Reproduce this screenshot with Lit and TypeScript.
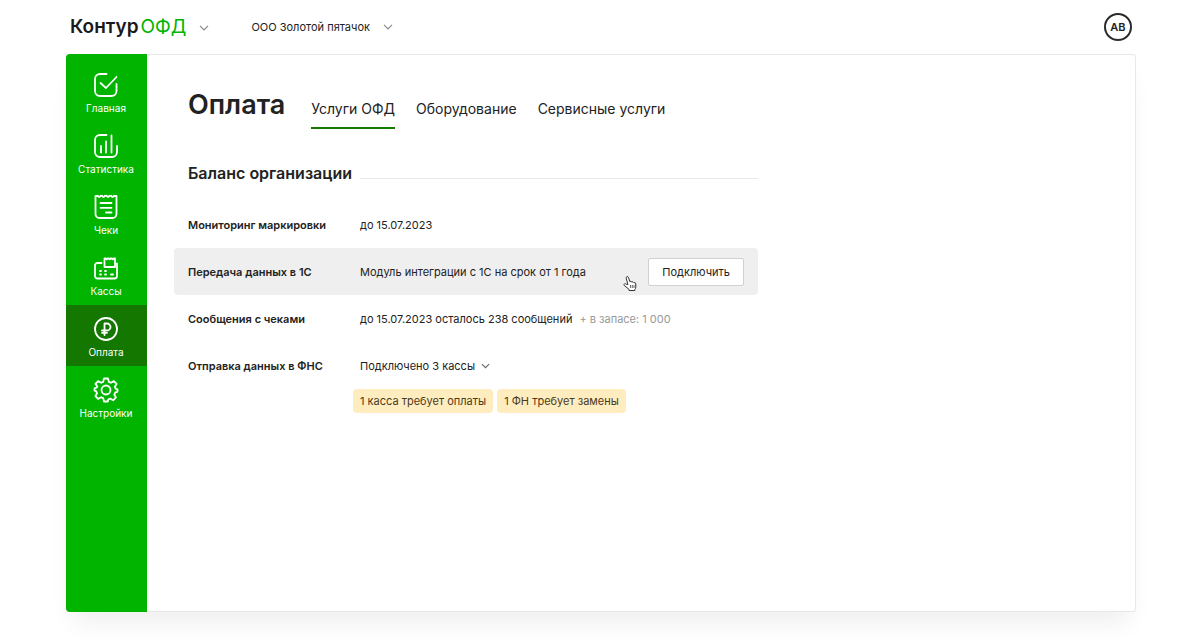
import { LitElement, html, css, svg } from "lit";
import { customElement, property } from "lit/decorators.js";
import { classMap } from "lit/directives/class-map.js";

const icons = {
  home: svg`<path d="M22.500 11V18a5 5 0 0 1-5 5H6a5 5 0 0 1-5-5V6a5 5 0 0 1 5-5H12.500M6.500 10L12 15L22.500 4"/>`,
  stats: svg`<path d="M12.500 1H6a5 5 0 0 0-5 5V18a5 5 0 0 0 5 5H18a5 5 0 0 0 5-5V12M7 12V18.500M12 7.500V18.500M17.500 1.500V18.500"/>`,
  receipts: svg`<path d="M1.500 1V19a4 4 0 0 0 4 4H18.500a4 4 0 0 0 4-4V1M4 .8q1.300 2.600 2.600 0M8.200 .8q1.300 2.600 2.600 0M12.800 .8q1.300 2.600 2.600 0M17.200 .8q1.300 2.600 2.600 0M1.500 1H4M6.600 .8H8.200M10.800 .8H12.800M15.400 .8H17.200M19.800 1H22.500M6.500 8H17.500M6.500 12.800H17.500M12 17.500H17.500"/>`,
  registers: svg`<path d="M7.500 7H3.500A2.500 2.500 0 0 0 1 9.500V20A2.500 2.500 0 0 0 3.500 22.500H20.500A2.500 2.500 0 0 0 23 20V7.500M10.500 11V2.500H12q.8 1.500 1.500 0H15q.8 1.500 1.500 0H18q.8 1.500 1.500 0H21V11ZM6 15H7M11 15H12M6 18.500H7M11 18.500H12M17 18.500H19"/>`,
  payment: svg`<circle cx="12" cy="12" r="11"/><path d="M10.500 18V6.500H13a3.500 3.500 0 0 1 0 7H8M8 15.800H13"/>`,
  settings: svg`<path d="M10 .5h4l.8 3.400 2 .9 3.100-1.700 2.700 2.800-1.700 2.900.9 2.100 1.700.5v2.200l-2.300 1-.9 2 1.600 2.900-2.700 2.800-3-1.700-2 .9L14 23.500h-4l-.8-3.400-2-.9-3.100 1.700-2.700-2.800L3 15.200l-.9-2-1.600-.6v-2.200l2.300-.9.500-1.200L1.400 5.900 4.100 3.100l3.100 1.700 2-.9z"/><circle cx="12" cy="12" r="4.500"/>`,
};

const chevron = html`<svg class="chevron" viewBox="0 0 10 6" aria-hidden="true">
  <path d="M1 .8L5 4.800L9 .8" />
</svg>`;

@customElement("side-item")
class SideItem extends LitElement {
  @property() label = "";
  @property() icon: keyof typeof icons = "home";
  @property({ type: Boolean }) active = false;

  static styles = css`
    :host { display: block; }
    .item {
      display: flex;
      flex-direction: column;
      align-items: center;
      gap: 3px;
      height: 61px;
      padding: 12px 1px 0 0;
      box-sizing: border-box;
      color: #fff;
      font-size: 10px;
      line-height: 16px;
      text-decoration: none;
    }
    .active { background: #137700; }
    svg {
      width: 24px;
      height: 24px;
      overflow: visible;
      fill: none;
      stroke: currentColor;
      stroke-width: 1.8;
      stroke-linecap: round;
      stroke-linejoin: round;
    }
  `;

  render() {
    return html`<a href="#" class=${classMap({ item: true, active: this.active })}>
      <svg viewBox="0 0 24 24" aria-hidden="true">${icons[this.icon]}</svg>${this.label}
    </a>`;
  }
}

@customElement("app-root")
class AppRoot extends LitElement {
  static styles = css`
    :host {
      display: flex;
      flex-direction: column;
      min-height: 100vh;
      box-sizing: border-box;
      padding: 0 64px 28px 66px;
      background: #fff;
      color: #222;
      font-family: Inter, "Open Sans", sans-serif;
      font-size: 11px;
      line-height: 16px;
    }
    button { font: inherit; color: inherit; background: none; border: 0; padding: 0; cursor: pointer; }
    a { color: inherit; text-decoration: none; }
    h1, h2, dl, dd { margin: 0; }
    .top { display: flex; align-items: center; height: 54px; padding: 0 4px; }
    .product { display: flex; align-items: center; gap: 13px; margin-right: 42px; }
    .logo { display: flex; gap: 2px; font-size: 19px; line-height: 24px; font-weight: 600; color: #1a1a1a; }
    .logo-ofd { color: #00b400; font-weight: 400; }
    .company, .registers { display: flex; align-items: center; gap: 13px; }
    .chevron { width: 10px; height: 6px; fill: none; stroke: #8a8a8a; stroke-width: 1.2; }
    .registers { gap: 6px; }
    .registers .chevron { width: 9px; stroke: #666; }
    .user {
      margin-left: auto;
      width: 28px;
      height: 28px;
      border: 2px solid #2b2b2b;
      border-radius: 50%;
      font-weight: 600;
    }
    .frame {
      flex: 1;
      display: flex;
      border-radius: 4px;
      box-shadow: 0 0 0 1px #e8e8e8 inset, 0 18px 24px -8px rgba(0, 0, 0, 0.07);
    }
    .side { width: 81px; padding-top: 7px; background: #00b400; border-radius: 4px 0 0 4px; }
    .content { flex: 1; max-width: 584px; padding: 33px 27px; }
    .head { display: flex; align-items: flex-start; gap: 26px; padding-left: 14px; }
    h1 { font-size: 27px; line-height: 36px; font-weight: 600; }
    .tabs { display: flex; gap: 21px; font-size: 14px; line-height: 20px; padding-top: 12px; }
    .tab { padding-bottom: 8px; border-bottom: 2px solid transparent; white-space: nowrap; }
    .tab.current { border-color: #137700; }
    .section { display: flex; align-items: center; gap: 8px; padding-left: 14px; margin: 32px 0 16px; }
    h2 { font-size: 16px; line-height: 24px; font-weight: 600; }
    .rule { flex: 1; height: 1px; margin-top: 10px; background: #e8e8e8; }
    .row {
      position: relative;
      display: flex;
      align-items: center;
      min-height: 47px;
      padding: 0 14px;
      border-radius: 4px;
    }
    .hover { background: #efefef; }
    dt { width: 172px; flex: none; font-weight: 600; }
    dd { flex: 1; display: flex; align-items: center; }
    .muted { color: #999; margin-left: 7px; }
    .connect {
      margin-left: auto;
      height: 28px;
      padding: 0 13px;
      background: #fff;
      border: 1px solid #d0d0d0;
      border-radius: 2px;
    }
    .pointer { position: absolute; left: 449px; top: 27px; width: 14px; height: 17px; }
    .warnings { display: flex; gap: 4px; padding-left: 179px; }
    .warning { padding: 4px 7px; background: #ffedbf; border-radius: 4px; color: #4a3a1c; white-space: nowrap; }
  `;

  render() {
    return html`
      <header class="top">
        <div class="product">
          <a class="logo" href="#"><span>Контур</span><span class="logo-ofd">ОФД</span></a>
          <button aria-label="Продукты">${chevron}</button>
        </div>
        <button class="company">ООО Золотой пятачок ${chevron}</button>
        <button class="user">АВ</button>
      </header>
      <div class="frame">
        <nav class="side">
          <side-item icon="home" label="Главная"></side-item>
          <side-item icon="stats" label="Статистика"></side-item>
          <side-item icon="receipts" label="Чеки"></side-item>
          <side-item icon="registers" label="Кассы"></side-item>
          <side-item icon="payment" label="Оплата" active></side-item>
          <side-item icon="settings" label="Настройки"></side-item>
        </nav>
        <main class="content">
          <div class="head">
            <h1>Оплата</h1>
            <nav class="tabs">
              <a class="tab current" href="#">Услуги ОФД</a>
              <a class="tab" href="#">Оборудование</a>
              <a class="tab" href="#">Сервисные услуги</a>
            </nav>
          </div>
          <div class="section"><h2>Баланс организации</h2><span class="rule"></span></div>
          <dl>
            <div class="row"><dt>Мониторинг маркировки</dt><dd>до 15.07.2023</dd></div>
            <div class="row hover">
              <dt>Передача данных в 1С</dt>
              <dd>Модуль интеграции с 1С на срок от 1 года<button class="connect">Подключить</button></dd>
              <svg class="pointer" viewBox="0 0 14 17" aria-hidden="true">
                <path d="M4.900 9.500L3.200 3.200a1.200 1.200 0 0 1 2.300-.7L6.800 6.500q1.300-.8 2 .5 1.400-.7 2 .6 1.800-.4 2 1.300V12q0 1.500-1 2.500V15.500H6V14.300L1.300 10.500q-.8-1.200.3-1.700 1.200-.4 2.200.7z" fill="#fff" stroke="#333" stroke-linejoin="round" />
                <path d="M7.500 10V13M9.300 10V13M11 10V13" stroke="#444" stroke-width=".8" />
              </svg>
            </div>
            <div class="row">
              <dt>Сообщения с чеками</dt>
              <dd>до 15.07.2023 осталось 238 сообщений<span class="muted">+ в запасе: 1 000</span></dd>
            </div>
            <div class="row">
              <dt>Отправка данных в ФНС</dt>
              <dd><button class="registers">Подключено 3 кассы ${chevron}</button></dd>
            </div>
          </dl>
          <div class="warnings">
            <a class="warning" href="#">1 касса требует оплаты</a>
            <a class="warning" href="#">1 ФН требует замены</a>
          </div>
        </main>
      </div>
    `;
  }
}
